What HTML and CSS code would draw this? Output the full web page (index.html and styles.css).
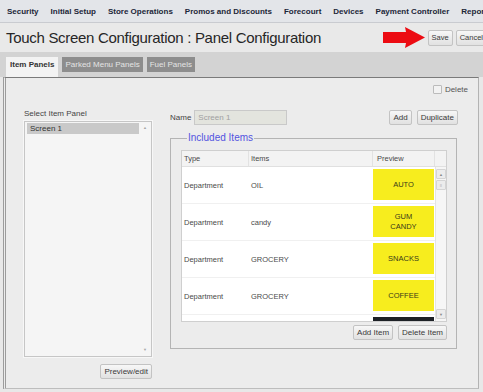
FILE: index.html
```html
<!DOCTYPE html>
<html lang="en">
<head>
  <meta charset="UTF-8" />
  <title>Touch Screen Configuration</title>
  <link rel="stylesheet" href="styles.css">
</head>
<body>
  <div class="nav">
    <span>Security</span>
    <span>Initial Setup</span>
    <span>Store Operations</span>
    <span>Promos and Discounts</span>
    <span>Forecourt</span>
    <span>Devices</span>
    <span>Payment Controller</span>
    <span>Reports</span>
  </div>

  <div class="head">
    <div class="page-title">Touch Screen Configuration : Panel Configuration</div>
    <div class="head-actions">
      <svg class="arrow" width="42" height="21" viewBox="0 0 42 21">
        <polygon points="0,5 23,5 22,0 42,10.5 22,21 23,16 0,16" fill="#ec0b12" />
      </svg>
      <button class="btn">Save</button>
      <button class="btn">Cancel</button>
    </div>
  </div>

  <div class="tabs">
    <div class="tab active">Item Panels</div>
    <div class="tab">Parked Menu Panels</div>
    <div class="tab">Fuel Panels</div>
  </div>

  <div class="panel">
    <div class="delete-row"><span class="check"></span>Delete</div>

    <div class="panel-body">
      <div class="left-col">
        <div class="field-label">Select Item Panel</div>
        <div class="listbox">
          <div class="list-items">
            <div class="list-item selected">Screen 1</div>
          </div>
          <div class="list-scroll"><span>&#9650;</span><span>&#9660;</span></div>
        </div>
        <div class="left-actions"><button class="btn">Preview/edit</button></div>
      </div>

      <div class="right-col">
        <div class="name-row">
          <span class="name-label">Name</span>
          <input class="name-input" type="text" value="Screen 1" disabled />
          <div class="spacer"></div>
          <button class="btn">Add</button>
          <button class="btn">Duplicate</button>
        </div>

        <fieldset class="included">
          <legend>Included Items</legend>
          <div class="grid">
            <div class="grid-head">
              <div class="c-type">Type</div>
              <div class="c-items">Items</div>
              <div class="c-preview">Preview</div>
              <div class="c-scroll"></div>
            </div>
            <div class="grid-body">
              <div class="rows">
                <div class="row">
                  <div class="c-type">Department</div>
                  <div class="c-items">OIL</div>
                  <div class="c-preview"><div class="tile">AUTO</div></div>
                </div>
                <div class="row">
                  <div class="c-type">Department</div>
                  <div class="c-items">candy</div>
                  <div class="c-preview"><div class="tile">GUM<br>CANDY</div></div>
                </div>
                <div class="row">
                  <div class="c-type">Department</div>
                  <div class="c-items">GROCERY</div>
                  <div class="c-preview"><div class="tile">SNACKS</div></div>
                </div>
                <div class="row">
                  <div class="c-type">Department</div>
                  <div class="c-items">GROCERY</div>
                  <div class="c-preview"><div class="tile">COFFEE</div></div>
                </div>
                <div class="row">
                  <div class="c-type"></div>
                  <div class="c-items"></div>
                  <div class="c-preview"><div class="tile dark"></div></div>
                </div>
              </div>
              <div class="vscroll">
                <span class="sb-btn">&#9650;</span>
                <span class="sb-btn">&#8801;</span>
                <span class="sb-fill"></span>
                <span class="sb-btn">&#9660;</span>
              </div>
            </div>
          </div>
          <div class="grid-actions">
            <button class="btn">Add Item</button>
            <button class="btn">Delete Item</button>
          </div>
        </fieldset>
      </div>
    </div>
  </div>
</body>
</html>
```

FILE: styles.css
```css
html, body {
  margin: 0;
  padding: 0;
  width: 483px;
  height: 392px;
  overflow: hidden;
  font-family: "Liberation Sans", Arial, sans-serif;
  background-color: #e8e8e8;
  color: #333;
}
.nav {
  height: 22px;
  display: flex;
  align-items: center;
  gap: 12px;
  padding-left: 7px;
  background-color: #e3e5e9;
  border-bottom: 1px solid #c9cbd0;
  font-size: 8px;
  font-weight: bold;
  color: #1c2638;
  white-space: nowrap;
}
.head {
  height: 29px;
  display: flex;
  align-items: center;
  padding-left: 6px;
  background-color: #e9e9e9;
}
.page-title {
  font-size: 15px;
  letter-spacing: -0.3px;
  color: #262626;
  white-space: nowrap;
}
.head-actions {
  margin-left: auto;
  margin-right: -4px;
  display: flex;
  align-items: center;
  gap: 3px;
}
.btn {
  height: 15px;
  padding: 0 3px;
  font-family: inherit;
  font-size: 8px;
  color: #3a3a3a;
  background: linear-gradient(#f7f7f7, #e1e1e1);
  border: 1px solid #c3c3c3;
  border-radius: 2px;
  line-height: 13px;
}
.head-actions .btn {
  height: 16px;
  padding: 0 3px;
  font-size: 7.5px;
}
.tabs {
  height: 25px;
  display: flex;
  align-items: flex-start;
  gap: 4px;
  padding: 5px 0 0 6px;
  box-sizing: border-box;
  background-color: #d3d3d3;
}
.tab {
  height: 15px;
  line-height: 15px;
  padding: 0 3px;
  font-size: 8px;
  color: #e4e4e4;
  background-color: #8d8d8d;
}
.tab.active {
  height: 20px;
  padding: 0 4px;
  font-weight: bold;
  color: #333;
  background-color: #f3f3f3;
}
.panel {
  width: 476px;
  margin-left: 3px;
  box-sizing: border-box;
  padding: 6px 20px 9px 18px;
  background-color: #ececec;
  border-top: 1px solid #7a7a7a;
  border-left: 3px double #9c9c9c;
  border-right: 1px solid #b3b3b3;
  border-bottom: 1px solid #bdbdbd;
}
.delete-row {
  height: 10px;
  margin-right: -10px;
  display: flex;
  justify-content: flex-end;
  align-items: center;
  gap: 3px;
  font-size: 8px;
  color: #555;
}
.check {
  width: 7px;
  height: 7px;
  border: 1px solid #bbb;
  border-radius: 1px;
  background-color: #f2f2f2;
}
.panel-body {
  margin-top: 15px;
  display: flex;
  gap: 18px;
}
.left-col {
  width: 128px;
  display: flex;
  flex-direction: column;
}
.field-label {
  height: 10px;
  font-size: 8px;
  line-height: 10px;
  color: #444;
}
.listbox {
  margin-top: 2px;
  height: 236px;
  box-sizing: border-box;
  display: flex;
  border: 1px solid #c6c6c6;
  box-shadow: 0 0 0 1px #f7f7f7;
  background-color: #f5f5f5;
}
.list-items {
  flex: 1;
  padding: 1px 0 0 2px;
}
.list-item {
  height: 11px;
  line-height: 11px;
  padding-left: 3px;
  font-size: 8px;
  color: #333;
}
.list-item.selected {
  background-color: #c9c9c9;
}
.list-scroll {
  width: 12px;
  display: flex;
  flex-direction: column;
  justify-content: space-between;
  align-items: center;
  padding: 3px 0 4px;
  font-size: 4px;
  color: #a5a5a5;
}
.left-actions {
  margin-top: 7px;
  display: flex;
  justify-content: flex-end;
}
.right-col {
  width: 288px;
}
.name-row {
  height: 16px;
  display: flex;
  align-items: center;
  gap: 5px;
}
.name-label {
  font-size: 8px;
  color: #444;
  margin-right: -2px;
}
.name-input {
  width: 93px;
  height: 15px;
  box-sizing: border-box;
  padding: 0 3px;
  font-family: inherit;
  font-size: 8px;
  color: #a0a0a0;
  background-color: #e3e4de;
  border: 1px solid #c9c9c9;
}
.spacer {
  flex: 1;
}
.included {
  margin: 7px 0 0;
  padding: 6px 9px 8px 10px;
  border: 1px solid #b4b4b4;
  width: 287px;
  box-sizing: border-box;
}
.included legend {
  padding: 0 1px;
  margin-left: 6px;
  font-size: 10px;
  line-height: 12px;
  color: #5353e0;
}
.grid {
  border: 1px solid #cfcfcf;
  background-color: #fff;
  font-size: 7.5px;
  color: #4a4a4a;
}
.grid-head {
  height: 15px;
  display: flex;
  background-color: #f3f3f3;
  border-bottom: 1px solid #e0e0e0;
}
.grid-head > div {
  line-height: 15px;
  padding-left: 2px;
  box-sizing: border-box;
  border-right: 1px solid #e2e2e2;
}
.grid-head .c-preview {
  padding-left: 4px;
}
.c-type {
  width: 67px;
  padding-left: 2px;
  box-sizing: border-box;
}
.c-items {
  width: 124px;
  padding-left: 2px;
  box-sizing: border-box;
}
.c-preview {
  width: 62px;
  box-sizing: border-box;
}
.grid-head .c-scroll {
  width: 11px;
  border-right: none;
}
.grid-body {
  height: 154px;
  display: flex;
}
.rows {
  width: 253px;
  overflow: hidden;
}
.row {
  height: 37px;
  display: flex;
  align-items: center;
  border-bottom: 1px solid #f0f0f0;
  box-sizing: border-box;
}
.row .c-preview {
  align-self: stretch;
  padding: 2px 1px 0 0;
}
.tile {
  height: 31px;
  display: flex;
  align-items: center;
  justify-content: center;
  text-align: center;
  font-size: 7.5px;
  line-height: 10px;
  color: #3a3a1a;
  background-color: #f7ed1e;
}
.tile.dark {
  background-color: #1d2126;
}
.vscroll {
  width: 11px;
  display: flex;
  flex-direction: column;
  align-items: center;
  padding: 2px 0 1px;
  box-sizing: border-box;
  background-color: #f6f6f6;
  border-left: 1px solid #e4e4e4;
}
.sb-btn {
  width: 8px;
  height: 8px;
  margin-bottom: 1px;
  display: flex;
  align-items: center;
  justify-content: center;
  font-size: 4px;
  color: #888;
  background-color: #ececec;
  border: 1px solid #d4d4d4;
  border-radius: 1px;
}
.sb-fill {
  flex: 1;
}
.grid-actions {
  margin-top: 3px;
  display: flex;
  justify-content: flex-end;
  gap: 5px;
}
```
